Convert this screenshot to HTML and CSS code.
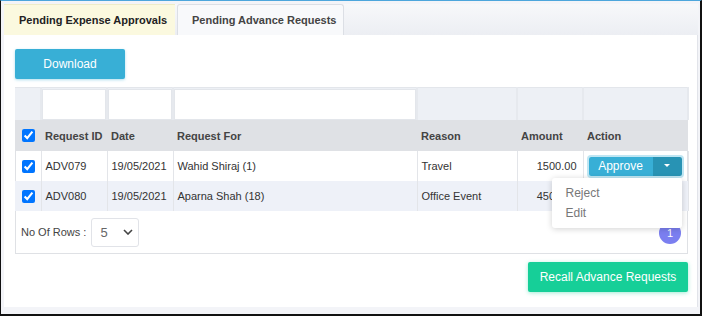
FILE: index.html
```html
<!DOCTYPE html>
<html lang="en">
<head>
    <meta charset="UTF-8">
    <meta name="viewport" content="width=device-width, initial-scale=1.0">
    <title>Pending Advance Requests</title>
    <link rel="stylesheet" href="styles.css">
</head>
<body>
    <div class="frame">
        <div class="tabs">
            <div class="tab tab-active">Pending Expense Approvals</div>
            <div class="tab tab-other">Pending Advance Requests</div>
        </div>

        <div class="panel">
            <button class="btn-download">Download</button>

            <div class="grid-box">
                <table class="grid">
                    <colgroup>
                        <col class="c-check">
                        <col class="c-id">
                        <col class="c-date">
                        <col class="c-for">
                        <col class="c-reason">
                        <col class="c-amount">
                        <col class="c-action">
                    </colgroup>
                    <tr class="filter-row">
                        <td></td>
                        <td><div class="filter-input"></div></td>
                        <td><div class="filter-input"></div></td>
                        <td><div class="filter-input"></div></td>
                        <td></td>
                        <td></td>
                        <td></td>
                    </tr>
                    <tr class="head-row">
                        <th><input type="checkbox" checked></th>
                        <th>Request ID</th>
                        <th>Date</th>
                        <th>Request For</th>
                        <th>Reason</th>
                        <th>Amount</th>
                        <th>Action</th>
                    </tr>
                    <tr class="data-row">
                        <td><input type="checkbox" checked></td>
                        <td>ADV079</td>
                        <td>19/05/2021</td>
                        <td>Wahid Shiraj (1)</td>
                        <td>Travel</td>
                        <td class="num">1500.00</td>
                        <td class="action-cell">
                            <div class="btn-group">
                                <button class="btn-approve">Approve</button>
                                <button class="btn-caret"><span class="caret"></span></button>
                            </div>
                            <ul class="menu">
                                <li>Reject</li>
                                <li>Edit</li>
                            </ul>
                        </td>
                    </tr>
                    <tr class="data-row alt">
                        <td><input type="checkbox" checked></td>
                        <td>ADV080</td>
                        <td>19/05/2021</td>
                        <td>Aparna Shah (18)</td>
                        <td>Office Event</td>
                        <td class="num">4500.00</td>
                        <td></td>
                    </tr>
                </table>

                <div class="grid-footer">
                    <span class="rows-label">No Of Rows :</span>
                    <div class="rows-select">
                        <span>5</span>
                        <svg width="10" height="6" viewBox="0 0 10 6"><path d="M1 1l4 4 4-4" fill="none" stroke="#444" stroke-width="1.6"/></svg>
                    </div>
                    <span class="page-dot">1</span>
                </div>
            </div>

            <div class="bottom-bar">
                <button class="btn-recall">Recall Advance Requests</button>
            </div>
        </div>
    </div>
</body>
</html>
```

FILE: styles.css
```css
body {
    margin: 0;
    font-family: "Liberation Sans", Arial, sans-serif;
    font-size: 11px;
    color: #333;
}

.frame {
    width: 702px;
    height: 316px;
    box-sizing: border-box;
    border-top: 1px solid #4da6dc;
    border-left: 1px solid #111;
    border-right: 2px solid #111;
    border-bottom: 2px solid #111;
    background: #f3f4f8;
    padding: 3px 2px 0 3px;
}

.tabs {
    display: flex;
    gap: 2px;
    height: 31px;
    background: linear-gradient(#f7f8fa, #eceef3);
}

.tab {
    display: flex;
    align-items: center;
    box-sizing: border-box;
    font-size: 11px;
    font-weight: bold;
    white-space: nowrap;
}

.tab-active {
    width: 171px;
    padding-left: 15px;
    background: #fbf9df;
    color: #222;
    border-top: 1px solid #eeecc8;
}

.tab-other {
    width: 167px;
    padding-left: 14px;
    background: #f8f9fb;
    color: #444;
    border: 1px solid #dcdfe5;
    border-bottom: none;
    border-radius: 3px 3px 0 0;
}

.panel {
    height: 272px;
    box-sizing: border-box;
    background: #fff;
    border-right: 1px solid #e2e4ea;
    padding: 14px 8px 0 11px;
}

.btn-download {
    display: block;
    width: 110px;
    height: 30px;
    border: none;
    border-radius: 2px;
    background: #38afd6;
    color: #fff;
    font-family: inherit;
    font-size: 12px;
    box-shadow: 0 1px 3px rgba(56, 175, 214, 0.4);
}

.grid-box {
    margin-top: 8px;
    width: 673px;
    border: 1px solid #dfe1e5;
    border-top: none;
    box-sizing: border-box;
}

.grid {
    width: 673px;
    margin-left: -1px;
    border-collapse: collapse;
    table-layout: fixed;
}

.c-check { width: 26px; }
.c-id { width: 66px; }
.c-date { width: 66px; }
.c-for { width: 244px; }
.c-reason { width: 100px; }
.c-amount { width: 66px; }
.c-action { width: 105px; }

.grid td,
.grid th {
    padding: 0 4px;
    text-align: left;
    white-space: nowrap;
}

.filter-row td {
    height: 32px;
    padding: 0;
    background: #edf0f5;
    border-right: 2px solid #e6e9ee;
    border-top: 1px solid #e3e6eb;
}

.filter-input {
    height: 31px;
    background: #fff;
    border: 1px solid #e3e6eb;
    box-sizing: border-box;
}

.head-row th {
    height: 31px;
    background: #dfe1e5;
    color: #444;
    font-weight: bold;
    font-size: 11px;
}

.data-row td {
    height: 30px;
    border-right: 1px solid #e3e5e9;
    color: #333;
}

.data-row.alt td {
    background: #eef1f8;
}

.grid input[type="checkbox"] {
    margin: 0 0 0 3px;
    width: 13px;
    height: 13px;
    vertical-align: middle;
}

.grid .num {
    text-align: right;
    padding-right: 6px;
}

.action-cell {
    position: relative;
}

.btn-group {
    display: flex;
    margin-left: 1px;
    box-shadow: 0 0 0 2px #bfe6f3;
    width: 93px;
    border-radius: 2px;
}

.btn-approve,
.btn-caret {
    height: 19px;
    border: none;
    color: #fff;
    font-family: inherit;
    font-size: 12px;
    padding: 0;
}

.btn-approve {
    width: 64px;
    background: #38afd6;
    border-radius: 2px 0 0 2px;
}

.btn-caret {
    width: 29px;
    background: #2893b4;
    border-radius: 0 2px 2px 0;
}

.caret {
    display: inline-block;
    border-left: 3px solid transparent;
    border-right: 3px solid transparent;
    border-top: 3px solid #fff;
    vertical-align: middle;
    margin-bottom: 2px;
}

.menu {
    position: absolute;
    top: 27px;
    right: 6px;
    width: 130px;
    margin: 0;
    padding: 5px 0;
    list-style: none;
    background: #fff;
    border-radius: 3px;
    box-shadow: 0 1px 6px rgba(0, 0, 0, 0.18);
    z-index: 2;
}

.menu li {
    padding: 0 14px;
    height: 20px;
    line-height: 20px;
    font-size: 12px;
    color: #777;
}

.grid-footer {
    display: flex;
    align-items: center;
    height: 42px;
    padding: 0 6px 0 5px;
}

.rows-label {
    color: #444;
    font-size: 11px;
}

.rows-select {
    display: flex;
    align-items: center;
    justify-content: space-between;
    margin-left: 5px;
    width: 48px;
    height: 29px;
    box-sizing: border-box;
    padding: 0 5px 0 8px;
    border: 1px solid #e1e3e8;
    border-radius: 3px;
    color: #666;
    font-size: 13px;
}

.page-dot {
    margin-left: auto;
    margin-top: 2px;
    width: 22px;
    height: 22px;
    border-radius: 50%;
    background: #7b7ff0;
    color: #fff;
    font-size: 11px;
    display: flex;
    align-items: center;
    justify-content: center;
}

.bottom-bar {
    display: flex;
    justify-content: flex-end;
    width: 673px;
    margin-top: 8px;
}

.btn-recall {
    width: 160px;
    height: 30px;
    border: none;
    border-radius: 2px;
    background: #16cf98;
    color: #fff;
    font-family: inherit;
    font-size: 12px;
    white-space: nowrap;
    box-shadow: 0 1px 4px rgba(22, 207, 152, 0.4);
}
```
